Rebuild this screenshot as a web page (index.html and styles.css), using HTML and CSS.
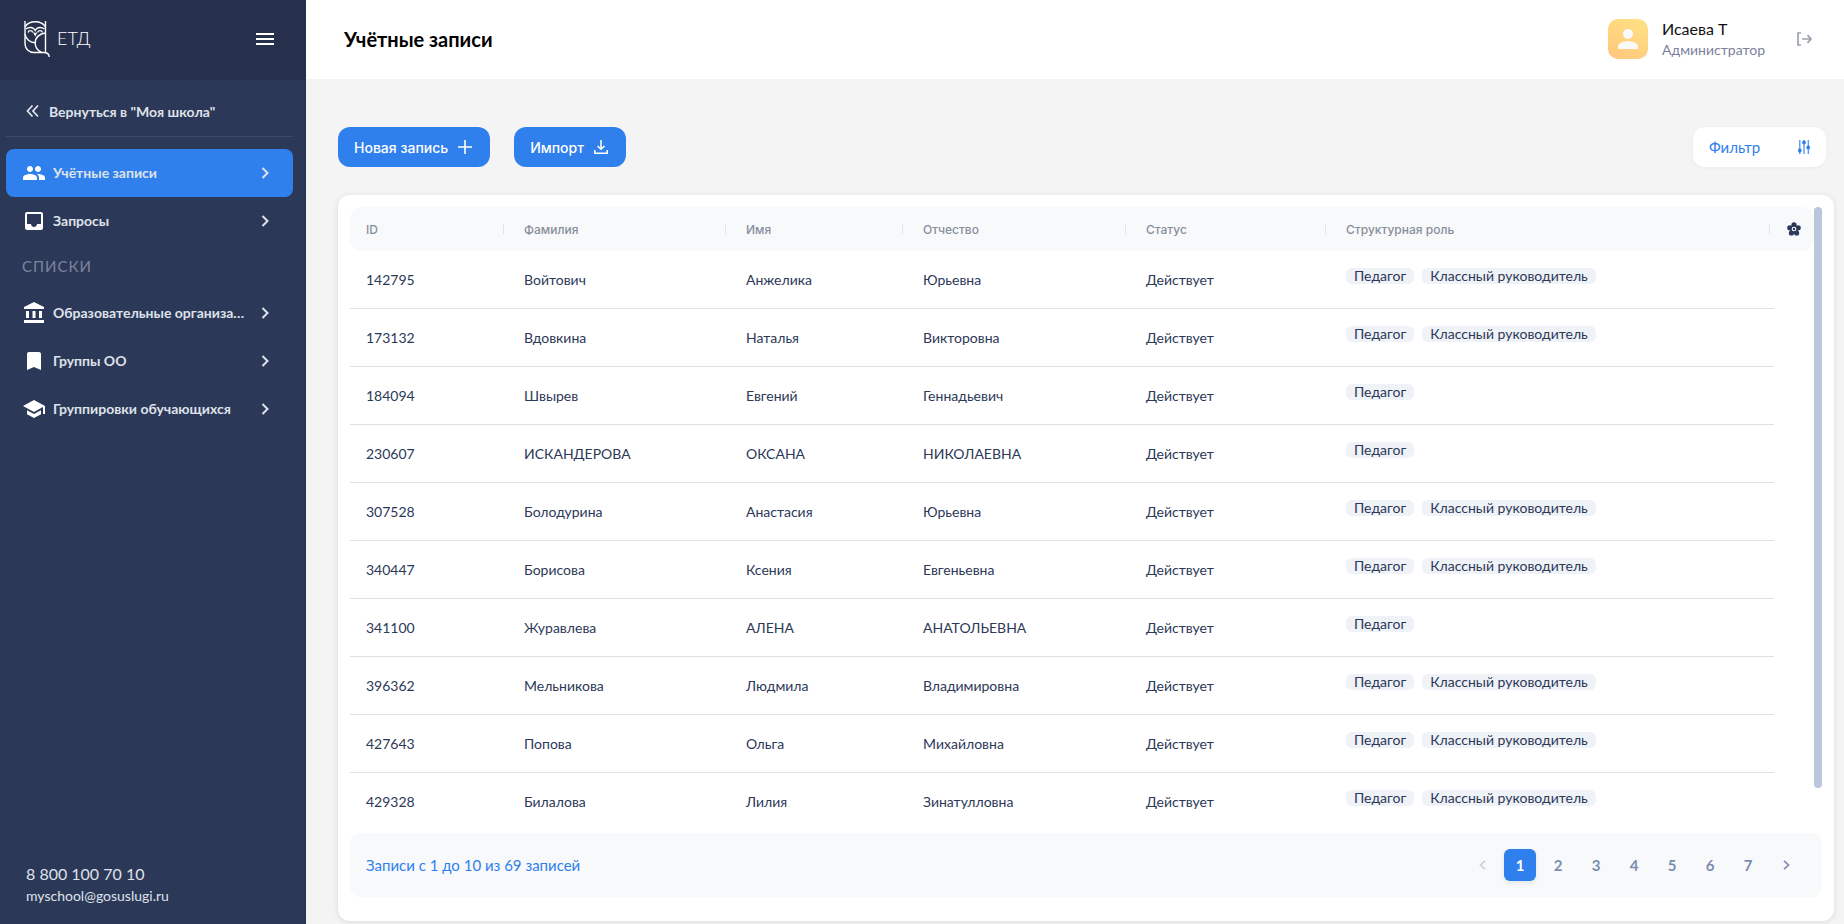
FILE: index.html
```html
<!DOCTYPE html>
<html lang="ru">
<head>
<meta charset="utf-8">
<title>Учётные записи</title>
<link rel="stylesheet" href="styles.css">
</head>
<body>
<div class="app">
  <aside class="sidebar">
    <div class="sidebar-head">
      <a class="logo" href="#" aria-label="ЕТД">
        <svg class="logo-owl" viewBox="0 0 26 36" fill="none" stroke="#fff" stroke-width="1.4">
          <path d="M1 0v22c0 6 4 9.500 9 9.500h9.500c3.500 0 5.700 1 5.700 4.500"/>
          <path d="M21.500 0v31.500"/>
          <path d="M1 6C3 2.500 6.500.8 11.200.8S19.500 2.500 21.500 6"/>
          <path d="M2 8c3-2.500 7.500-2 9.200 1.500C13 6 17.500 5.500 20.500 8"/>
          <path d="M4 11.500c.8-2.500 4-2.500 4.800 0M13.700 11.500c.8-2.500 4-2.500 4.800 0M9.800 11.500l1.400 2.500 1.400-2.500"/>
          <path d="M21.500 12c-6 .5-10.300 4.500-10.300 10 0 4 2.300 7.500 6.300 9.500"/>
          <path d="M1 13c.8 5 5 8.500 10.200 8.800"/>
        </svg>
        <span class="logo-text">ЕТД</span>
      </a>
      <button class="icon-button" type="button" aria-label="Меню">
        <svg width="18" height="12" viewBox="0 0 18 12" fill="#fff"><path d="M0 0h18v2H0zM0 5h18v2H0zM0 10h18v2H0z"/></svg>
      </button>
    </div>
    <nav class="nav">
      <a class="back" href="#">
        <svg width="14" height="14" viewBox="0 0 14 14" fill="none" stroke="#e4e7ee" stroke-width="1.7"><path d="M6.500 1.500 1.500 7l5 5.500M12 1.500 7 7l5 5.500"/></svg>
        <span>Вернуться в "Моя школа"</span>
      </a>
      <a class="nav-item active" href="#">
        <svg class="nav-icon" viewBox="0 0 24 24"><path d="M16 11c1.660 0 2.990-1.340 2.990-3S17.660 5 16 5s-3 1.340-3 3 1.340 3 3 3zm-8 0c1.660 0 2.990-1.340 2.990-3S9.660 5 8 5 5 6.340 5 8s1.340 3 3 3zm0 2c-2.330 0-7 1.170-7 3.500V19h14v-2.500C15 14.170 10.330 13 8 13zm8 0c-.29 0-.62.020-.97.050 1.160.84 1.970 1.970 1.970 3.450V19h6v-2.500c0-2.330-4.670-3.500-7-3.500z"/></svg>
        <span class="nav-label">Учётные записи</span>
        <svg class="chevron" viewBox="0 0 8 12"><path d="m1.500 1 5 5-5 5"/></svg>
      </a>
      <a class="nav-item" href="#">
        <svg class="nav-icon" viewBox="0 0 24 24"><path d="M19 3H5c-1.100 0-2 .9-2 2v14c0 1.100.9 2 2 2h14c1.100 0 2-.9 2-2V5c0-1.100-.9-2-2-2zm0 12h-4c0 1.660-1.350 3-3 3s-3-1.340-3-3H5V5h14v10z"/></svg>
        <span class="nav-label">Запросы</span>
        <svg class="chevron" viewBox="0 0 8 12"><path d="m1.500 1 5 5-5 5"/></svg>
      </a>
      <h2 class="nav-title">СПИСКИ</h2>
      <a class="nav-item" href="#">
        <svg class="nav-icon" viewBox="0 0 24 24"><path d="M4 10v7h3v-7H4zm6.500 0v7h3v-7h-3zM2 22h20v-3H2v3zm15-12v7h3v-7h-3zM12 1 2 6v2h20V6L12 1z"/></svg>
        <span class="nav-label">Образовательные организации</span>
        <svg class="chevron" viewBox="0 0 8 12"><path d="m1.500 1 5 5-5 5"/></svg>
      </a>
      <a class="nav-item" href="#">
        <svg class="nav-icon" viewBox="0 0 24 24"><path d="M17 3H7c-1.100 0-2 .9-2 2v16l7-3 7 3V5c0-1.100-.9-2-2-2z"/></svg>
        <span class="nav-label">Группы ОО</span>
        <svg class="chevron" viewBox="0 0 8 12"><path d="m1.500 1 5 5-5 5"/></svg>
      </a>
      <a class="nav-item" href="#">
        <svg class="nav-icon" viewBox="0 0 24 24"><path d="M5 13.180v4L12 21l7-3.820v-4L12 17l-7-3.820zM12 3 1 9l11 6 9-4.910V17h2V9L12 3z"/></svg>
        <span class="nav-label">Группировки обучающихся</span>
        <svg class="chevron" viewBox="0 0 8 12"><path d="m1.500 1 5 5-5 5"/></svg>
      </a>
    </nav>
    <address class="contacts">
      <a class="phone" href="tel:88001007010">8 800 100 70 10</a>
      <a class="email" href="mailto:myschool@gosuslugi.ru">myschool@gosuslugi.ru</a>
    </address>
  </aside>

  <div class="content">
    <header class="topbar">
      <h1 class="page-title">Учётные записи</h1>
      <div class="user">
        <span class="avatar"><svg width="20" height="20" viewBox="0 0 20 20" fill="#fafafa"><circle cx="10" cy="5" r="5"/><path d="M0 20v-2.500C0 14 6 12.200 10 12.200S20 14 20 17.500V20z"/></svg></span>
        <div class="user-text">
          <span class="user-name">Исаева Т</span>
          <span class="user-role">Администратор</span>
        </div>
        <button class="icon-button" type="button" aria-label="Выйти">
          <svg width="15" height="14" viewBox="0 0 15 14" fill="none" stroke="#9aa3b0" stroke-width="1.700"><path d="M4 1H1v12h3M5 7h9M10.500 3.200 14 7l-3.500 3.800"/></svg>
        </button>
      </div>
    </header>

    <main class="main">
      <div class="toolbar">
        <button class="button primary" type="button">Новая запись
          <svg width="14" height="14" viewBox="0 0 14 14" fill="none" stroke="#fff" stroke-width="1.600"><path d="M7 0v14M0 7h14"/></svg>
        </button>
        <button class="button primary" type="button">Импорт
          <svg width="14" height="14" viewBox="0 0 14 14" fill="none" stroke="#fff" stroke-width="1.500"><path d="M7 0v9M3.500 6 7 9.300 10.500 6M.8 10v3.200h12.400V10"/></svg>
        </button>
        <button class="button filter" type="button">Фильтр
          <svg width="12" height="14" viewBox="0 0 12 14" fill="#2f80ed"><path d="M1 0h1.500v14H1zM5.300 0h1.500v14H5.300zM9.600 0h1.500v14H9.600z" opacity=".75"/><circle cx="1.800" cy="10.500" r="1.900"/><circle cx="6" cy="2.500" r="1.900"/><circle cx="10.200" cy="7.500" r="1.900"/></svg>
        </button>
      </div>

      <section class="card">
        <div class="table-area">
        <div class="table-scroll">
          <table class="table">
            <colgroup>
              <col class="col-id"><col class="col-surname"><col class="col-name"><col class="col-patronymic"><col class="col-status"><col><col class="col-settings">
            </colgroup>
            <thead>
              <tr>
                <th scope="col">ID</th><th scope="col">Фамилия</th><th scope="col">Имя</th><th scope="col">Отчество</th><th scope="col">Статус</th><th scope="col">Структурная роль</th>
                <th class="settings"><button class="icon-button" type="button" aria-label="Настройка столбцов"><svg width="14" height="14" viewBox="0 0 14 14"><g fill="#2c3858"><circle cx="7" cy="2.800" r="2.600"/><circle cx="11.200" cy="5.800" r="2.600"/><circle cx="9.600" cy="11" r="2.600"/><circle cx="4.400" cy="11" r="2.600"/><circle cx="2.800" cy="5.800" r="2.600"/><circle cx="7" cy="7" r="4"/></g><circle cx="7" cy="7" r="1.800" fill="none" stroke="#fff" stroke-width="1.100"/></svg></button></th>
              </tr>
            </thead>
            <tbody>
              <tr><td>142795</td><td>Войтович</td><td>Анжелика</td><td>Юрьевна</td><td>Действует</td><td><div class="chips"><span class="chip">Педагог</span><span class="chip">Классный руководитель</span></div></td></tr>
              <tr><td>173132</td><td>Вдовкина</td><td>Наталья</td><td>Викторовна</td><td>Действует</td><td><div class="chips"><span class="chip">Педагог</span><span class="chip">Классный руководитель</span></div></td></tr>
              <tr><td>184094</td><td>Швырев</td><td>Евгений</td><td>Геннадьевич</td><td>Действует</td><td><div class="chips"><span class="chip">Педагог</span></div></td></tr>
              <tr><td>230607</td><td>ИСКАНДЕРОВА</td><td>ОКСАНА</td><td>НИКОЛАЕВНА</td><td>Действует</td><td><div class="chips"><span class="chip">Педагог</span></div></td></tr>
              <tr><td>307528</td><td>Болодурина</td><td>Анастасия</td><td>Юрьевна</td><td>Действует</td><td><div class="chips"><span class="chip">Педагог</span><span class="chip">Классный руководитель</span></div></td></tr>
              <tr><td>340447</td><td>Борисова</td><td>Ксения</td><td>Евгеньевна</td><td>Действует</td><td><div class="chips"><span class="chip">Педагог</span><span class="chip">Классный руководитель</span></div></td></tr>
              <tr><td>341100</td><td>Журавлева</td><td>АЛЕНА</td><td>АНАТОЛЬЕВНА</td><td>Действует</td><td><div class="chips"><span class="chip">Педагог</span></div></td></tr>
              <tr><td>396362</td><td>Мельникова</td><td>Людмила</td><td>Владимировна</td><td>Действует</td><td><div class="chips"><span class="chip">Педагог</span><span class="chip">Классный руководитель</span></div></td></tr>
              <tr><td>427643</td><td>Попова</td><td>Ольга</td><td>Михайловна</td><td>Действует</td><td><div class="chips"><span class="chip">Педагог</span><span class="chip">Классный руководитель</span></div></td></tr>
              <tr><td>429328</td><td>Билалова</td><td>Лилия</td><td>Зинатулловна</td><td>Действует</td><td><div class="chips"><span class="chip">Педагог</span><span class="chip">Классный руководитель</span></div></td></tr>
            </tbody>
          </table>
        </div>
        <div class="scrollbar" aria-hidden="true"><div class="scrollbar-thumb"></div></div>
        </div>
        <footer class="card-footer">
          <p class="summary">Записи с 1 до 10 из 69 записей</p>
          <nav class="pager" aria-label="Страницы">
            <button class="page arrow" type="button" disabled aria-label="Назад"><svg width="7" height="10" viewBox="0 0 7 10"><path d="M6 .8 1.500 5 6 9.200"/></svg></button>
            <button class="page current" type="button" aria-current="page">1</button>
            <button class="page" type="button">2</button>
            <button class="page" type="button">3</button>
            <button class="page" type="button">4</button>
            <button class="page" type="button">5</button>
            <button class="page" type="button">6</button>
            <button class="page" type="button">7</button>
            <button class="page arrow" type="button" aria-label="Вперёд"><svg width="7" height="10" viewBox="0 0 7 10"><path d="M1 .8 5.500 5 1 9.200"/></svg></button>
          </nav>
        </footer>
      </section>
    </main>
  </div>
</div>
</body>
</html>
```
FILE: styles.css
```css
* { box-sizing: border-box; }

body {
  margin: 0;
  font-family: Lato, "Open Sans", sans-serif;
  font-size: 14px;
  color: #2c3858;
  background: #f4f4f4;
}

a { color: inherit; text-decoration: none; }
button { font: inherit; border: 0; cursor: pointer; }
svg { display: block; flex: none; }

.app { display: flex; height: 100vh; }

.sidebar {
  flex: none;
  width: 306px;
  display: flex;
  flex-direction: column;
  background: #2c3858;
  border-right: 1px solid #262f4d;
  color: #dfe2ea;
}

.sidebar-head {
  display: flex;
  align-items: center;
  justify-content: space-between;
  height: 80px;
  padding: 0 31px 2px 24px;
  background: #26304d;
}

.logo { display: flex; align-items: center; gap: 7px; }
.logo-owl { width: 26px; height: 36px; }
.logo-text { padding-bottom: 2px; font-size: 18px; font-weight: 300; color: #fff; line-height: 20px; }

.icon-button {
  display: flex;
  padding: 0;
  background: none;
}

.nav { flex: 1; padding: 0 12px 0 6px; }

.back {
  display: flex;
  align-items: center;
  gap: 9px;
  height: 57px;
  padding: 6px 20px 0;
  margin-bottom: 12px;
  border-bottom: 1px solid #3e4a6b;
  font-weight: 700;
}

.nav-item {
  display: flex;
  align-items: center;
  height: 48px;
  padding: 0 24px 0 16px;
  border-radius: 8px;
  font-weight: 700;
}

.active { background: #2f80ed; }
.nav-icon { width: 24px; height: 24px; fill: #fff; }

.nav-label {
  flex: 1;
  min-width: 0;
  margin: 0 14px 0 7px;
  padding-bottom: 2px;
  overflow: hidden;
  text-overflow: ellipsis;
  white-space: nowrap;
}

.chevron {
  width: 8px;
  height: 12px;
  fill: none;
  stroke: #dfe2ea;
  stroke-width: 2;
}

.nav-title {
  margin: 0;
  padding: 0 16px 2px;
  font-size: 15px;
  font-weight: 400;
  line-height: 42px;
  letter-spacing: 1px;
  color: #7c859c;
}

.contacts {
  display: flex;
  flex-direction: column;
  padding: 0 26px 17px;
  font-style: normal;
  line-height: 22px;
}

.phone { font-size: 16px; }

.content {
  flex: 1;
  min-width: 0;
  display: flex;
  flex-direction: column;
}

.topbar {
  flex: none;
  display: flex;
  align-items: center;
  justify-content: space-between;
  height: 79px;
  padding: 0 32px 2px 38px;
  background: #fff;
}

.page-title {
  margin: 0;
  font-size: 20px;
  font-weight: 700;
  color: #000;
}

.user { display: flex; align-items: center; }

.avatar {
  display: flex;
  align-items: center;
  justify-content: center;
  width: 40px;
  height: 40px;
  border-radius: 10px;
  background: linear-gradient(30deg, #ffc67c, #ffe284);
}

.user-text {
  display: flex;
  flex-direction: column;
  margin: 0 32px 0 14px;
  line-height: 21px;
}

.user-name { font-size: 16px; color: #111; }
.user-role { color: #7c809c; }

.main {
  flex: 1;
  min-height: 0;
  display: flex;
  flex-direction: column;
  gap: 28px;
  padding: 48px 10px 3px 32px;
}

.toolbar { display: flex; gap: 24px; padding-right: 8px; }

.button {
  display: flex;
  align-items: center;
  height: 40px;
  padding: 0 16px;
  border-radius: 12px;
}

.primary {
  gap: 10px;
  padding-right: 18px;
  background: #2f80ed;
  color: #fff;
  font-family: Inter, sans-serif;
  font-size: 14px;
  font-weight: 500;
}

.filter {
  justify-content: space-between;
  width: 133px;
  margin-left: auto;
  background: #fff;
  color: #2f80ed;
  font-size: 15px;
  box-shadow: 0 1px 4px rgba(0, 0, 0, .04);
}

.card {
  flex: 1;
  min-height: 0;
  display: flex;
  flex-direction: column;
  gap: 24px;
  padding: 12px 12px 24px;
  border-radius: 12px;
  background: #fff;
  box-shadow: 0 1px 6px rgba(0, 0, 0, .1);
}

.table-area { flex: 1; min-height: 0; display: flex; }
.table-scroll { flex: 1; min-width: 0; overflow-y: auto; scrollbar-width: none; }
.scrollbar { flex: none; width: 8px; }

.scrollbar-thumb {
  height: 96.5%;
  border-radius: 4px;
  background: #bac6da;
}

.table {
  width: 100%;
  table-layout: fixed;
  border-collapse: separate;
  border-spacing: 0;
}

.col-id { width: 158px; }
.col-surname { width: 222px; }
.col-name { width: 177px; }
.col-patronymic { width: 223px; }
.col-status { width: 200px; }
.col-settings { width: 40px; }

th {
  height: 44px;
  padding: 0 16px;
  background: linear-gradient(#e1e4ea, #e1e4ea) right 4px center / 1px 10px no-repeat #f8f9fb;
  font-family: Inter, sans-serif;
  font-size: 12px;
  font-weight: 500;
  text-align: left;
  color: #868e9c;
}

th:first-child { border-radius: 12px 0 0 12px; }

.settings {
  padding: 0 13px;
  border-radius: 0 12px 12px 0;
  background: #f8f9fb;
}

td {
  height: 58px;
  padding: 0 16px;
  border-bottom: 1px solid #e0e0e0;
}

tbody tr:last-child td { border-bottom-color: transparent; }

.chips { display: flex; gap: 8px; padding-bottom: 8px; }

.chip {
  padding: 0 8px;
  border-radius: 6px;
  background: #eff2f6;
  line-height: 16px;
}

.card-footer {
  flex: none;
  display: flex;
  align-items: center;
  justify-content: space-between;
  height: 64px;
  padding: 0 20px 0 16px;
  border-radius: 10px;
  background: #f8f9fb;
}

.summary { margin: 0; font-size: 15px; color: #2f80ed; }
.pager { display: flex; gap: 6px; }

.page {
  display: flex;
  align-items: center;
  justify-content: center;
  width: 32px;
  height: 32px;
  padding: 0;
  border-radius: 6px;
  background: none;
  font-size: 15px;
  font-weight: 700;
  color: #7b8db3;
}

.current {
  background: #2f80ed;
  color: #fff;
  box-shadow: 0 2px 4px rgba(0, 0, 0, .08);
}

.arrow svg { fill: none; stroke: #7b8db3; stroke-width: 1.700; }
.arrow:disabled svg { stroke: #c8d0de; }
```
